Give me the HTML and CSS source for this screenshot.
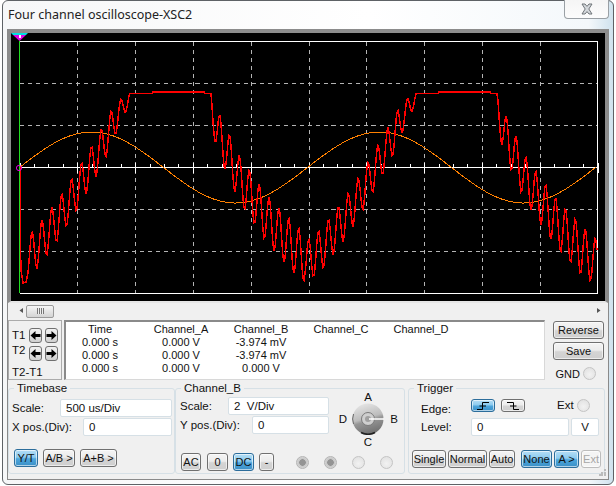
FILE: index.html
```html
<!DOCTYPE html>
<html lang="en">
<head>
<meta charset="utf-8">
<title>Four channel oscilloscope-XSC2</title>
<link rel="stylesheet" href="styles.css">
</head>
<body>
<div class="window">
  <div class="titlebar">
    <div class="title">Four channel oscilloscope-XSC2</div>
    <div class="close">
      <svg width="14" height="12" viewBox="0 0 14 12"><path d="M2 1h3l2 2.400L9 1h3L8.800 6 12 11H9L7 8.600 5 11H2l3.200-5z" fill="#d4d8dc" stroke="#6f7478"/></svg>
    </div>
  </div>
  <div class="client">
    <div class="screen">
      <svg id="plot" class="plot" width="594" height="268" viewBox="11 33 594 268"></svg>
    </div>
    <div class="scrollbar">
      <svg width="12" height="15" viewBox="0 0 12 15"><path d="M9 5v5L5.500 7.500z" fill="#555"/></svg>
      <div class="thumb"><span class="grip"></span></div>
      <svg class="end" width="12" height="15" viewBox="0 0 12 15"><path d="M4 5v5l3.500-2.500z" fill="#555"/></svg>
    </div>
    <div class="measure">
      <div class="cursors">
        <div class="cursor-row"><span class="cursor-label">T1</span>
          <button class="arrow"><svg width="11" height="11" viewBox="0 0 11 11"><path d="M0.500 5.500 5.500 1v3H10.500v3H5.500v3z"/></svg></button>
          <button class="arrow"><svg width="11" height="11" viewBox="0 0 11 11"><path d="M10.500 5.500 5.500 1v3H0.500v3H5.500v3z"/></svg></button>
        </div>
        <div class="cursor-row"><span class="cursor-label raised">T2</span>
          <button class="arrow"><svg width="11" height="11" viewBox="0 0 11 11"><path d="M0.500 5.500 5.500 1v3H10.500v3H5.500v3z"/></svg></button>
          <button class="arrow"><svg width="11" height="11" viewBox="0 0 11 11"><path d="M10.500 5.500 5.500 1v3H0.500v3H5.500v3z"/></svg></button>
        </div>
        <div class="cursor-diff">T2-T1</div>
      </div>
      <div class="readout">
        <span class="cell wide">Time</span><span class="cell">Channel_A</span><span class="cell">Channel_B</span><span class="cell">Channel_C</span><span class="cell">Channel_D</span>
        <span class="cell wide">0.000 s</span><span class="cell">0.000 V</span><span class="cell">-3.974 mV</span><span class="cell"></span><span class="cell"></span>
        <span class="cell wide">0.000 s</span><span class="cell">0.000 V</span><span class="cell">-3.974 mV</span><span class="cell"></span><span class="cell"></span>
        <span class="cell wide">0.000 s</span><span class="cell">0.000 V</span><span class="cell">0.000 V</span><span class="cell"></span><span class="cell"></span>
      </div>
      <div class="side">
        <button class="btn side-btn">Reverse</button>
        <button class="btn side-btn">Save</button>
        <div class="gnd"><span>GND</span><span class="led"></span></div>
      </div>
    </div>
    <div class="controls">
      <fieldset class="group timebase">
        <legend>Timebase</legend>
        <div class="row tb-first"><label>Scale:</label><input class="field w112" value="500 us/Div"></div>
        <div class="row tb-second"><label>X pos.(Div):</label><input class="field w89" value="0"></div>
        <div class="btn-row tb-btns">
          <button class="btn on w24">Y/T</button>
          <button class="btn w32">A/B &gt;</button>
          <button class="btn w37">A+B &gt;</button>
        </div>
      </fieldset>
      <fieldset class="group channel">
        <legend>Channel_B</legend>
        <div class="ch-top">
          <div class="ch-fields">
            <div class="row"><label>Scale:</label><input class="field w101" value="2  V/Div"></div>
            <div class="row"><label>Y pos.(Div):</label><input class="field w77" value="0"></div>
          </div>
          <div class="knob">
            <span class="k-a">A</span>
            <span class="k-d">D</span>
            <svg class="k-disc" width="32" height="32" viewBox="0 0 32 32">
              <defs>
                <linearGradient id="disc" x1="0.200" y1="0" x2="0.500" y2="1">
                  <stop offset="0" stop-color="#e8e8e8"/><stop offset="0.500" stop-color="#bcbcbc"/><stop offset="0.600" stop-color="#969696"/><stop offset="1" stop-color="#707070"/>
                </linearGradient>
              </defs>
              <circle cx="16" cy="16" r="15.500" fill="url(#disc)"/>
              <path d="M9 29.500a15 15 0 0 0 14 0" fill="none" stroke="#222" stroke-width="1.500"/>
              <path d="M1.500 11a15 15 0 0 0 0 10" fill="none" stroke="#666"/>
              <circle cx="16" cy="16" r="6.500" fill="#cfcfcf" stroke="#7a7a7a"/>
              <circle cx="16" cy="16" r="3" fill="#a0a0a0"/>
              <path d="M17 16H32" stroke="#fff" stroke-width="1.500"/>
            </svg>
            <span class="k-b">B</span>
            <span class="k-c">C</span>
          </div>
        </div>
        <div class="btn-row ch-btns">
          <button class="btn w20">AC</button>
          <button class="btn w21 m1">0</button>
          <button class="btn on w21">DC</button>
          <button class="btn w15">-</button>
          <span class="leds">
            <span class="led lit"></span><span class="led lit"></span><span class="led"></span><span class="led"></span>
          </span>
        </div>
      </fieldset>
      <fieldset class="group trigger">
        <legend>Trigger</legend>
        <div class="tr-first">
          <label class="tr-label">Edge:</label>
          <button class="btn on edge"><svg width="14" height="10" viewBox="0 0 14 10"><path d="M1 8.500H6.500V1.500H13M3.500 5H10" fill="none" stroke="#000"/></svg></button>
          <button class="btn edge"><svg width="14" height="10" viewBox="0 0 14 10"><path d="M1 1.500H7.500V8.500H13M4 5H10.500" fill="none" stroke="#000"/></svg></button>
          <span class="tr-ext">Ext</span><span class="led"></span>
        </div>
        <div class="tr-second">
          <label class="tr-label">Level:</label>
          <input class="field w98" value="0"><input class="field w28 center" value="V">
        </div>
        <div class="btn-row tr-btns">
          <button class="btn w34">Single</button>
          <button class="btn w39">Normal</button>
          <button class="btn w26">Auto</button>
          <button class="btn on w31 m4">None</button>
          <button class="btn on w25">A &gt;</button>
          <button class="btn off w20">Ext</button>
        </div>
      </fieldset>
    </div>
    <svg class="grip-corner" width="7" height="7" viewBox="0 0 7 7"><path d="M5 0h2v2H5zM5 3h2v2H5zM2 3h2v2H2zM5 5h2v2H5zM2 5h2v2H2zM0 5h2v2H0z" fill="#bbb"/></svg>
  </div>
</div>
<script src="script.js"></script>
</body>
</html>
```
FILE: styles.css
```css
* { box-sizing: border-box; }
html, body { margin: 0; padding: 0; background: #fff; }
body { width: 616px; height: 486px; overflow: hidden; font: 11px "Liberation Sans", Arial, sans-serif; color: #111; }

.window {
  width: 612px; height: 485px; margin-left: 2px; padding: 0 4px 4px;
  border: 1px solid #5e6266; border-radius: 6px;
  background: linear-gradient(90deg, #f6f7f8 0, #ffffff 60%, #f4f8fb 96%, #cfe2ee 100%);
}
.titlebar { height: 28px; display: flex; justify-content: space-between; margin: 0 -1px 0 1px; }
.title { font: 12.500px/18px "Noto Sans", sans-serif; color: #222; padding-top: 5px; }
.close {
  width: 45px; height: 19px; margin-top: -1px; margin-right: 1px;
  border: 1px solid #9aa0a5; border-top: 0; border-radius: 0 0 4px 4px;
  background: linear-gradient(#f5f5f5, #fcfcfc);
  display: flex; align-items: center; justify-content: center;
}

.client { width: 602px; height: 451px; border: 1px solid #8a8a8a; border-top: 0; background: #f0f0f0; display: flex; flex-direction: column; position: relative; }

.screen { height: 274px; border: 3px solid #8c8c8c; border-top-width: 4px; border-bottom: 2px solid #e6e6e6; background: #000; flex: none; }
.plot { display: block; background: #000; }

.scrollbar { height: 15px; flex: none; display: flex; align-items: center; padding-left: 6px; background: #f0f0f0; }
.thumb { width: 28px; height: 13px; margin-top: 1px; border: 1px solid #9a9a9a; border-radius: 2px; background: linear-gradient(#f6f6f6, #d4d4d4); display: flex; align-items: center; justify-content: center; }
.grip { width: 7px; height: 6px; background: repeating-linear-gradient(90deg, #777 0 1px, #eee 1px 2px); }
.end { margin-left: auto; margin-right: 3px; }

.measure { display: flex; height: 60px; margin-top: 2px; flex: none; }
.cursors { width: 54px; height: 60px; border: 1px solid #ababab; padding: 6px 0 0 3px; display: flex; flex-direction: column; background: #f0f0f0; }
.cursor-row { display: flex; align-items: center; height: 18px; }
.cursor-label { width: 20px; font-size: 11.500px; line-height: 13px; }
.raised { margin-top: -6px; }
.arrow { width: 13px; height: 15px; margin: 0 3px 0 0; padding: 0; border: 1px solid #707070; border-radius: 3px; background: linear-gradient(#f2f2f2, #d0d0d0); display: flex; align-items: center; justify-content: center; }
.cursor-diff { margin-top: 3px; font-size: 11.500px; line-height: 14px; }

.readout { width: 481px; height: 60px; margin-left: 2px; padding-top: 1px; background: #fff; border: 1px solid #d8d8d8; border-top: 2px solid #8a8a8a; border-left: 2px solid #8a8a8a; display: grid; grid-template-columns: 75px repeat(4, 80px); grid-auto-rows: 13px; align-content: start; }
.cell { text-align: center; line-height: 13px; white-space: pre; font-size: 11px; }
.wide { padding-right: 7px; }

.side { width: 51px; margin-left: 8px; display: flex; flex-direction: column; gap: 3px; margin-top: 1px; }
.side-btn { height: 17px; width: 51px; }
.gnd { display: flex; align-items: center; justify-content: flex-end; gap: 3px; margin-top: 4px; margin-right: 8px; }

.btn { padding: 0; margin: 0; font: 11px "Liberation Sans", Arial, sans-serif; color: #111; white-space: nowrap; border: 1px solid #707070; border-radius: 3px; background: linear-gradient(#f4f4f4 0, #ececec 45%, #d4d4d4 55%, #cfcfcf 100%); box-shadow: inset 0 0 0 1px rgba(255,255,255,.6); height: 18px; }
.btn.on { border-color: #2c6d9b; background: linear-gradient(#b5def5 0, #8ccbef 45%, #4da6dc 55%, #3a8fc6 100%); }
.btn.off { color: #a6a6a6; border-color: #bcbcbc; background: #f4f4f4; }

.led { display: inline-block; width: 13px; height: 13px; border-radius: 50%; border: 1px solid #c4c4c4; background: radial-gradient(circle at 50% 60%, #f2f2f2, #dedede); flex: none; }
.led.lit { background: radial-gradient(circle, #949494 0 3px, #c6c6c6 3.500px, #e4e4e4 100%); border-color: #b4b4b4; }

.controls { display: flex; flex: none; margin-top: 1px; }
.group { margin: 0; padding: 0; height: 93px; min-width: 0; border: 1px solid #d6e0e6; border-radius: 3px; display: block; }
.group legend { padding: 0 3px; margin: 0 0 -6px 5px; font-size: 11.500px; line-height: 14px; color: #111; }
.timebase { width: 167px; }
.channel { width: 230px; }
.trigger { width: 197px; margin-left: 3px; }

.row { display: flex; align-items: center; justify-content: space-between; padding: 0 2px 0 3px; font-size: 11.500px; }
.field { height: 18px; padding: 0 0 0 5px; font: 11.500px "Liberation Sans", Arial, sans-serif; color: #111; background: #fff; border: 1px solid #d6e0e6; border-radius: 2px; outline: none; white-space: pre; }
.w112 { width: 112px; } .w89 { width: 89px; } .w101 { width: 101px; } .w77 { width: 77px; } .w98 { width: 98px; } .w28 { width: 28px; }
.center { text-align: center; padding: 0; }
.w15 { width: 15px; } .w20 { width: 20px; } .w21 { width: 21px; } .w24 { width: 24px; } .w25 { width: 25px; } .w26 { width: 26px; }
.w31 { width: 31px; } .w32 { width: 32px; } .w34 { width: 34px; } .w37 { width: 37px; } .w39 { width: 39px; }

.tb-first { margin-top: 10px; }
.tb-second { margin-top: 1px; }
.btn-row { display: flex; align-items: center; }
.tb-btns { margin-top: 13px; padding-left: 5px; gap: 5px; }

.ch-top { display: flex; height: 62px; }
.ch-fields { width: 153px; padding-top: 8px; padding-left: 1px; display: flex; flex-direction: column; gap: 1px; }
.ch-fields .row { padding-right: 0; }
.knob { margin: 2px 0 0 5px; display: grid; grid-template-columns: 18px 32px 20px; grid-template-rows: 12px 32px 14px; justify-items: center; align-items: center; font-size: 11.500px; }
.k-a { grid-column: 2; grid-row: 1; }
.k-d { grid-column: 1; grid-row: 2; }
.k-disc { grid-column: 2; grid-row: 2; display: block; }
.k-b { grid-column: 3; grid-row: 2; }
.k-c { grid-column: 2; grid-row: 3; }
.ch-btns { margin-top: 2px; padding-left: 5px; gap: 5px; }
.m1 { margin-left: 1px; }
.leds { display: flex; gap: 15px; margin-left: 17px; }

.tr-first { display: flex; align-items: flex-start; margin-top: 10px; padding-left: 12px; height: 19px; font-size: 11.500px; }
.tr-label { width: 50px; padding-top: 3px; line-height: 14px; font-size: 11.500px; }
.edge { width: 24px; height: 13px; display: flex; align-items: center; justify-content: center; margin-right: 6px; }
.tr-ext { margin-left: 26px; line-height: 12px; }
.tr-first .led { margin: 0 0 0 3px; }
.tr-second { display: flex; align-items: center; padding-left: 12px; gap: 2px; }
.tr-second .tr-label { width: 48px; padding-top: 0; }
.tr-btns { margin-top: 14px; padding-left: 3px; gap: 2px; }
.m4 { margin-left: 4px; }

.grip-corner { position: absolute; right: 2px; bottom: 3px; }
```
FILE: script.js
```js
(function () {
  var NS = 'http://www.w3.org/2000/svg';
  var svg = document.getElementById('plot');
  var X0 = 19.5, X1 = 597.5, TOP = 41.5, BOT = 293.5, MID = 167.5, STEP = 57.8, PERIOD = 286;

  function add(tag, attrs) {
    var el = document.createElementNS(NS, tag);
    for (var k in attrs) el.setAttribute(k, attrs[k]);
    svg.appendChild(el);
    return el;
  }
  function lerp(knots, x) {
    for (var i = 1; i < knots.length; i++) {
      if (x <= knots[i][0]) {
        var a = knots[i - 1], b = knots[i];
        return a[1] + (b[1] - a[1]) * (x - a[0]) / (b[0] - a[0]);
      }
    }
    return knots[knots.length - 1][1];
  }

  // dashed graticule
  var grid = '';
  for (var i = 1; i < 10; i++) {
    var gx = Math.round(X0 + STEP * i) + 0.5;
    grid += 'M' + gx + ' ' + TOP + 'V' + BOT;
  }
  [83.5, 125.5, 209.5, 251.5].forEach(function (y) { grid += 'M' + X0 + ' ' + y + 'H' + X1; });
  add('path', { d: grid, stroke: '#b4b4b4', 'stroke-width': 1, 'stroke-dasharray': '4 4', fill: 'none', 'shape-rendering': 'crispEdges' });

  // frame and centre axis
  add('path', { d: 'M' + X0 + ' ' + TOP + 'H' + X1 + 'V' + BOT + 'H' + X0, stroke: '#fff', 'stroke-width': 1.2, fill: 'none', 'shape-rendering': 'crispEdges' });
  var ticks = 'M' + X0 + ' ' + MID + 'H' + X1;
  for (var t = 0; t <= 40; t++) {
    var tx = Math.round(X0 + STEP * t / 4) + 0.5;
    ticks += 'M' + tx + ' ' + (t % 4 === 0 ? MID - 5 : MID - 4) + 'V' + (t % 4 === 0 ? MID + 5 : MID);
  }
  add('path', { d: ticks, stroke: '#fff', 'stroke-width': 1.2, fill: 'none', 'shape-rendering': 'crispEdges' });

  // orange sine
  var orange = [];
  for (var ox = 20; ox <= 597; ox += 2) {
    orange.push(ox + ',' + (167.5 - 35.5 * Math.sin(2 * Math.PI * (ox - 19.5) / 288)).toFixed(1));
  }
  add('polyline', { points: orange.join(' '), stroke: '#ff8000', 'stroke-width': 1, fill: 'none', 'shape-rendering': 'crispEdges' });

  // red rippled, clipped signal
  var meanK = [[20,262],[35,250],[60,217],[77,190],[99,152],[118,115],[128,100],[133,94],[137,60],[205,60],[210,100],[216,128],[240,180],[268,220],[298,253],[306,258]];
  var ampK = [[20,21],[60,20],[110,18],[128,7],[135,7],[210,15],[222,22],[300,25],[306,23]];
  var red = ['20,167', '20,225', '21,270', '23,283', '26,282'];
  for (var rx = 28; rx <= 597; rx += 1) {
    var p = (rx - 20) % PERIOD + 20;
    var y = lerp(meanK, p) - lerp(ampK, p) * Math.cos(2 * Math.PI * (rx - 32) / 9.88);
    var clip = (p > 152 && p < 205) ? 92 : 93.5;
    red.push(rx + ',' + Math.max(y, clip).toFixed(1));
  }
  add('polyline', { points: red.join(' '), stroke: '#ff0000', 'stroke-width': 1.5, fill: 'none', 'shape-rendering': 'crispEdges' });

  // cursor lines and markers
  add('path', { d: 'M' + X0 + ' 41V293', stroke: '#22dd22', 'stroke-width': 1, fill: 'none', 'shape-rendering': 'crispEdges' });
  add('circle', { cx: 19, cy: 168, r: 2.6, fill: 'none', stroke: '#e000e0', 'stroke-width': 1 });
  add('path', { d: 'M11 33H28L26 35H13z', fill: '#00e0e0' });
  add('path', { d: 'M13 35H26L19.500 41z', fill: '#e000e0' });
  add('path', { d: 'M19 35h2v3h-2z', fill: '#fff' });
})();
```
